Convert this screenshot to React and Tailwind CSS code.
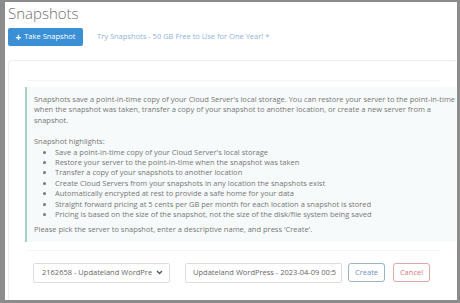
import React from "react";

const highlights = [
  "Save a point-in-time copy of your Cloud Server's local storage",
  "Restore your server to the point-in-time when the snapshot was taken",
  "Transfer a copy of your snapshots to another location",
  "Create Cloud Servers from your snapshots in any location the snapshots exist",
  "Automatically encrypted at rest to provide a safe home for your data",
  "Straight forward pricing at 5 cents per GB per month for each location a snapshot is stored",
  "Pricing is based on the size of the snapshot, not the size of the disk/file system being saved",
];

const App = () => {
  return (
    <div
      className="h-[303px] w-[460px] overflow-hidden border-[#8c8c8c] border-l-[5px] border-t-2 border-r-[3px] border-b-[3px] bg-white text-[#777]"
      style={{ fontFamily: "'Open Sans', 'Noto Sans', sans-serif" }}
    >
      {/* HEADER */}
      <div className="pl-[3px]">
        <h1 className="text-[15px] font-light leading-[22px] text-[#707070]">Snapshots</h1>
        <div className="flex items-center mt-[4px]">
          <button className="h-[18px] w-[75px] rounded-[2px] bg-[#3b8fd5] text-white text-[7.5px] flex items-center justify-center gap-[3px]">
            <span className="text-[10px] font-bold leading-none">+</span>
            Take Snapshot
          </button>
          <span className="ml-[14px] text-[7.5px] text-[#8fb5d6]">
            Try Snapshots - 50 GB Free to Use for One Year! *
          </span>
        </div>
      </div>

      {/* CARD */}
      <div className="mt-[14px] ml-[3px] rounded-t-[4px] border border-[#eeeeee] border-r-0 border-b-0 h-[245px]">
        <div className="h-[20px] border-b border-[#f3f3f3] mx-[18px]" />
        <div className="ml-[16px] mt-[6px] border-l-2 border-[#a8cfc4] bg-[#f6fafa] pl-[7px] pt-[7px] pb-[7px] text-[7.5px] leading-[10.4px] whitespace-nowrap">
          <p>
            Snapshots save a point-in-time copy of your Cloud Server's local storage. You can restore your server to the point-in-time
          </p>
          <p>when the snapshot was taken, transfer a copy of your snapshot to another location, or create a new server from a</p>
          <p>snapshot.</p>
          <p className="mt-[11px]">Snapshot highlights:</p>
          <ul className="list-disc pl-[21px]">
            {highlights.map((h) => (
              <li key={h}>{h}</li>
            ))}
          </ul>
          <p className="mt-[5px]">Please pick the server to snapshot, enter a descriptive name, and press 'Create'.</p>
        </div>
        <div className="h-[9px] border-b border-[#f3f3f3] mx-[18px]" />

        {/* FORM ROW */}
        <div className="flex items-center mt-[12px] ml-[24px] text-[7.5px]">
          <div className="w-[137px] h-[20px] border border-[#dddddd] rounded-[2px] flex items-center justify-between pl-[8px] pr-[6px] text-[#666]">
            <span className="whitespace-nowrap overflow-hidden w-[110px]">2162658 - Updateland WordPress</span>
            <svg width="7" height="5" viewBox="0 0 7 5">
              <path d="M1 1 L3.5 3.5 L6 1" fill="none" stroke="#555" strokeWidth="1.3" />
            </svg>
          </div>
          <div className="ml-[15px] w-[157px] h-[20px] border border-[#dddddd] rounded-[2px] flex items-center pl-[7px] text-[#666] whitespace-nowrap overflow-hidden">
            Updateland WordPress - 2023-04-09 00:5
          </div>
          <button className="ml-[6px] w-[37px] h-[19px] border border-[#9cb4c8] rounded-[3px] text-[#6d93b8]">Create</button>
          <button className="ml-[8px] w-[37px] h-[19px] border border-[#e0a8a8] rounded-[3px] text-[#d87a7a]">Cancel</button>
        </div>
      </div>
    </div>
  );
};

export default App;
